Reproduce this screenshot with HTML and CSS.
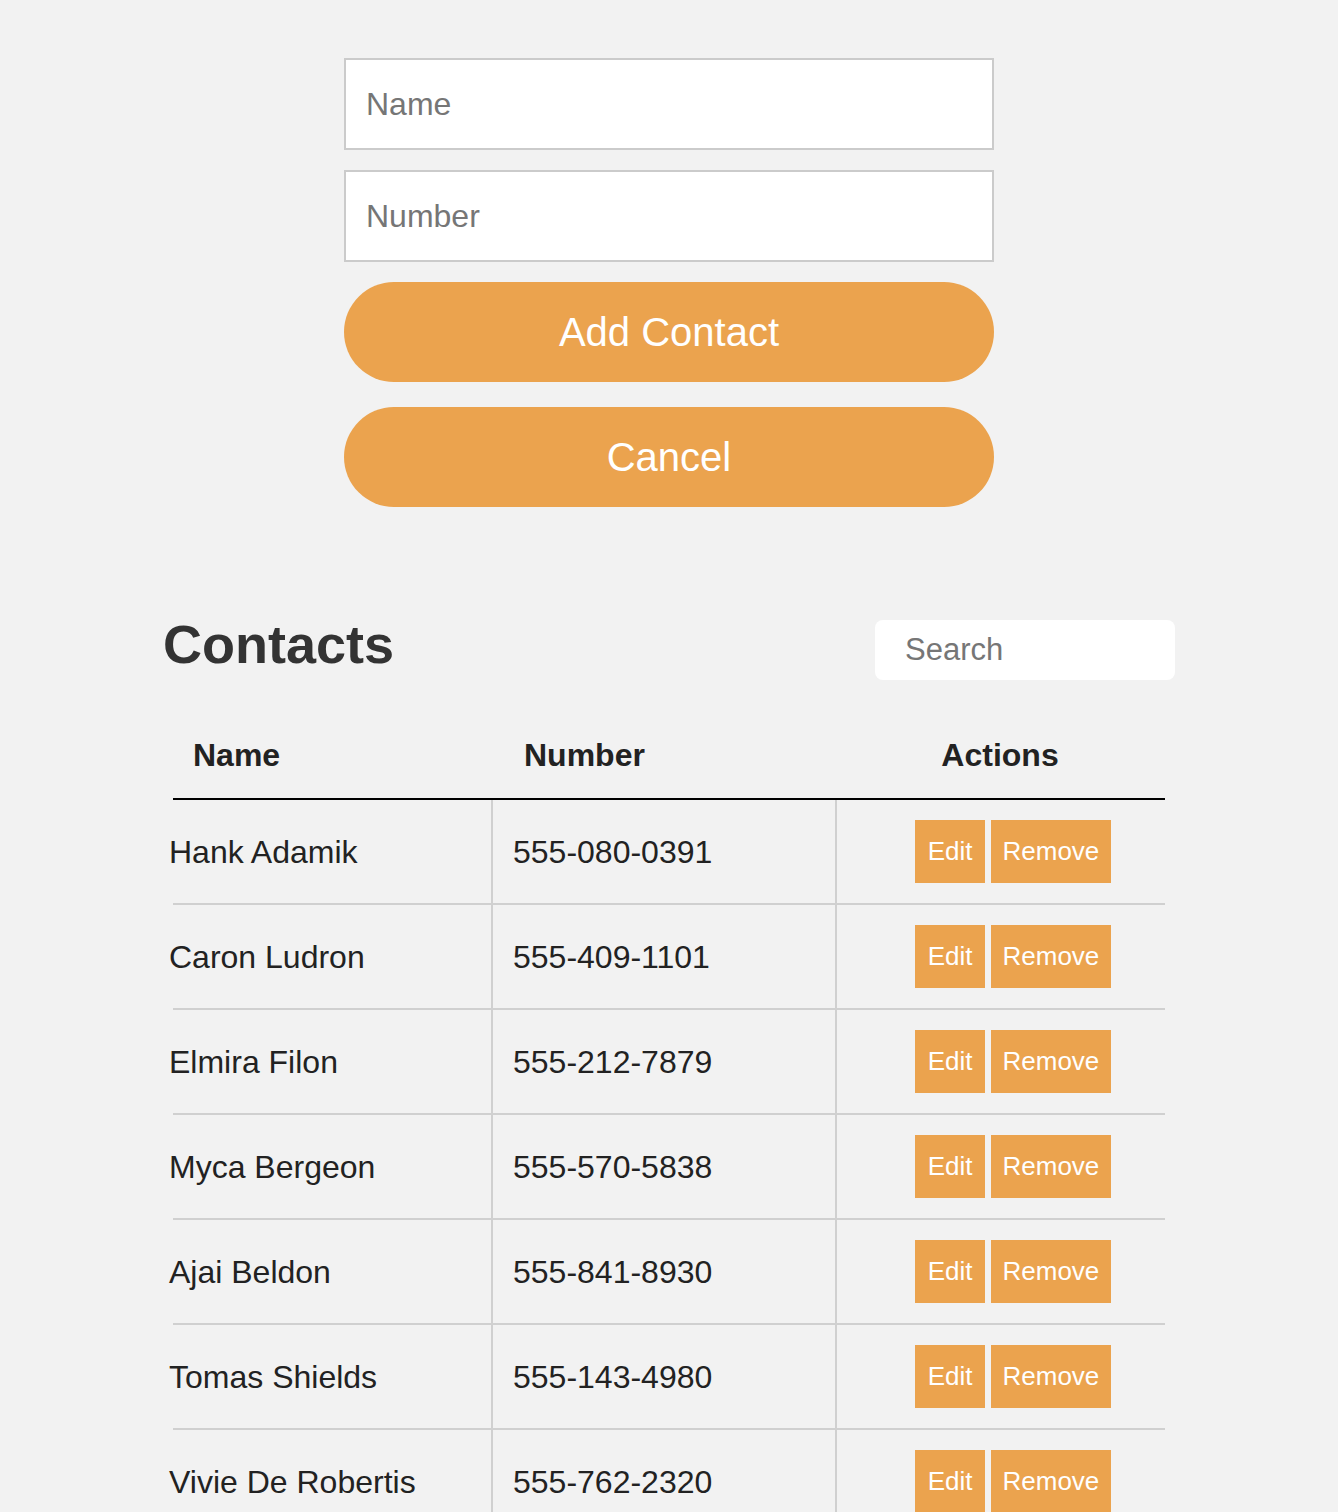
FILE: index.html
```html
<!DOCTYPE html>
<html lang="en">
<head>
<meta charset="utf-8">
<title>Contacts</title>
<link rel="stylesheet" href="styles.css">
</head>
<body>
<form class="contact-form">
  <input class="field" type="text" placeholder="Name">
  <input class="field" type="text" placeholder="Number">
  <button type="button" class="pill-btn add-btn">Add Contact</button>
  <button type="button" class="pill-btn">Cancel</button>
</form>

<section class="contacts">
  <div class="contacts-head">
    <h2 class="contacts-title">Contacts</h2>
    <input class="search" type="text" placeholder="Search">
  </div>
  <div class="table">
    <div class="thead">
      <div class="th th-name">Name</div>
      <div class="th th-number">Number</div>
      <div class="th th-actions">Actions</div>
    </div>
    <div class="row">
      <div class="cell cell-name"><span class="name-text">Hank Adamik</span></div>
      <div class="cell cell-number"><span class="num-text">555-080-0391</span></div>
      <div class="cell cell-actions"><button class="act-btn edit-btn">Edit</button><button class="act-btn">Remove</button></div>
    </div>
    <div class="row">
      <div class="cell cell-name"><span class="name-text">Caron Ludron</span></div>
      <div class="cell cell-number"><span class="num-text">555-409-1101</span></div>
      <div class="cell cell-actions"><button class="act-btn edit-btn">Edit</button><button class="act-btn">Remove</button></div>
    </div>
    <div class="row">
      <div class="cell cell-name"><span class="name-text">Elmira Filon</span></div>
      <div class="cell cell-number"><span class="num-text">555-212-7879</span></div>
      <div class="cell cell-actions"><button class="act-btn edit-btn">Edit</button><button class="act-btn">Remove</button></div>
    </div>
    <div class="row">
      <div class="cell cell-name"><span class="name-text">Myca Bergeon</span></div>
      <div class="cell cell-number"><span class="num-text">555-570-5838</span></div>
      <div class="cell cell-actions"><button class="act-btn edit-btn">Edit</button><button class="act-btn">Remove</button></div>
    </div>
    <div class="row">
      <div class="cell cell-name"><span class="name-text">Ajai Beldon</span></div>
      <div class="cell cell-number"><span class="num-text">555-841-8930</span></div>
      <div class="cell cell-actions"><button class="act-btn edit-btn">Edit</button><button class="act-btn">Remove</button></div>
    </div>
    <div class="row">
      <div class="cell cell-name"><span class="name-text">Tomas Shields</span></div>
      <div class="cell cell-number"><span class="num-text">555-143-4980</span></div>
      <div class="cell cell-actions"><button class="act-btn edit-btn">Edit</button><button class="act-btn">Remove</button></div>
    </div>
    <div class="row">
      <div class="cell cell-name"><span class="name-text">Vivie De Robertis</span></div>
      <div class="cell cell-number"><span class="num-text">555-762-2320</span></div>
      <div class="cell cell-actions"><button class="act-btn edit-btn">Edit</button><button class="act-btn">Remove</button></div>
    </div>
  </div>
</section>
</body>
</html>
```

FILE: styles.css
```css
* { box-sizing: border-box; }

body {
  margin: 0;
  background: #f2f2f2;
  font-family: "Liberation Sans", Arial, Helvetica, sans-serif;
  color: #222;
}

.contact-form {
  width: 650px;
  margin: 58px auto 0;
  display: flex;
  flex-direction: column;
}

.field {
  height: 92px;
  border: 2px solid #cbcbcb;
  background: #fff;
  padding: 0 20px;
  font-family: "Liberation Sans", Arial, sans-serif;
  font-size: 32px;
  color: #222;
  margin-bottom: 20px;
  outline: none;
}
.field::placeholder { color: #767676; }

.pill-btn {
  height: 100px;
  border: none;
  border-radius: 50px;
  background: #eba34e;
  color: #fff;
  font-family: "Liberation Sans", Arial, sans-serif;
  font-size: 40px;
  padding: 0;
}
.add-btn { margin-bottom: 25px; }

.contacts {
  width: 1012px;
  margin: 106px auto 0;
}

.contacts-head {
  display: flex;
  justify-content: space-between;
  align-items: flex-start;
}

.contacts-title {
  margin: 0;
  font-size: 54px;
  line-height: 62px;
  font-weight: bold;
  color: #333;
}

.search {
  margin-top: 7px;
  width: 300px;
  height: 60px;
  border: none;
  border-radius: 8px;
  background: #fff;
  padding: 0 30px;
  font-family: "Liberation Sans", Arial, sans-serif;
  font-size: 31px;
  outline: none;
}
.search::placeholder { color: #767676; }

.table {
  margin: 0 10px;
}

.thead,
.row {
  display: grid;
  grid-template-columns: 320px 344px 1fr;
}

.thead {
  border-bottom: 2px solid #000;
}

.th {
  padding: 57px 0 24px;
  font-size: 32px;
  line-height: 37px;
  font-weight: bold;
  color: #222;
}
.th-name { padding-left: 20px; }
.th-number { padding-left: 31px; }
.th-actions { text-align: center; padding-right: 2px; }

.row {
  border-bottom: 2px solid #d0d0d0;
}

.cell {
  display: flex;
  align-items: center;
  padding: 20px 0;
  font-size: 32px;
}
.cell-name,
.cell-number { border-right: 2px solid #d0d0d0; }
.name-text { margin: 2px 0 0 -4px; }
.num-text { margin-top: 2px; }
.cell-number { padding-left: 20px; }

.cell-actions {
  justify-content: center;
  padding-left: 24px;
  gap: 6px;
}

.act-btn {
  height: 63px;
  padding: 0 11.5px;
  border: none;
  background: #eba34e;
  color: #fff;
  font-family: "Liberation Sans", Arial, sans-serif;
  font-size: 26px;
}
.edit-btn { padding: 0 12.5px; }
```
